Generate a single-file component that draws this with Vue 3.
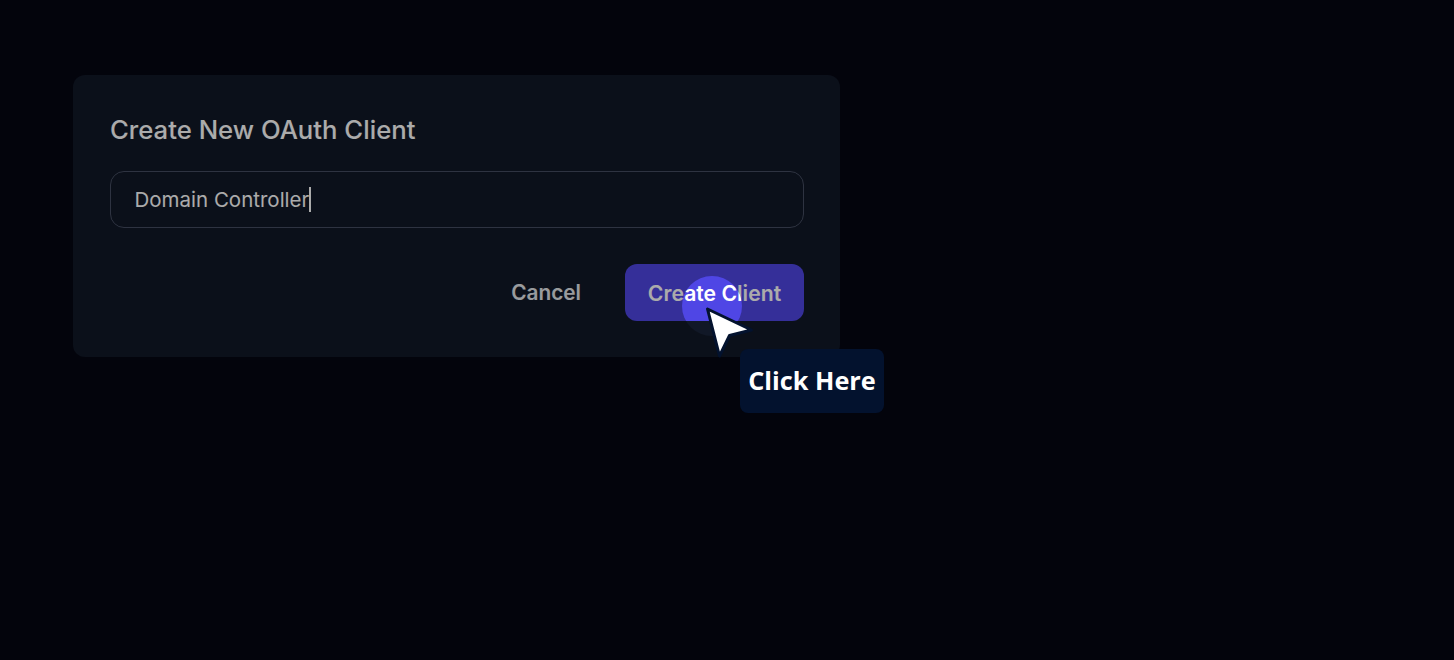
<script setup>
const title = 'Create New OAuth Client'
const clientName = 'Domain Controller'
</script>

<template>
  <main class="page">
    <section class="card">
      <h2 class="title">{{ title }}</h2>
      <div class="field">
        <span class="value">{{ clientName }}</span><span class="caret"></span>
      </div>
      <div class="actions">
        <button class="cancel" type="button">Cancel</button>
        <button class="create" type="button">Create Client</button>
      </div>
    </section>

    <div class="spotlight"></div>
    <svg class="pointer" width="52" height="54" viewBox="0 0 52 54">
      <path d="M3.5 4 L47.5 25 L25.5 30.5 L15.5 51 Z" fill="#ffffff" stroke="#03122e" stroke-width="3" stroke-linejoin="round" />
    </svg>
    <div class="hint">Click Here</div>
  </main>
</template>

<style>
html, body {
  margin: 0;
  background: #050613;
  overflow: hidden;
}
</style>

<style scoped>
.page {
  position: relative;
  box-sizing: border-box;
  width: 1454px;
  height: 660px;
  padding: 75px 0 0 73px;
  overflow: hidden;
  background: #050613;
  font-family: Inter, "Liberation Sans", sans-serif;
}
.card {
  box-sizing: border-box;
  width: 767px;
  height: 282px;
  padding: 36px;
  border-radius: 12px;
  background: #111827;
}
.title {
  margin: 0 0 0 1px;
  font-size: 25.7px;
  line-height: 38px;
  font-weight: 500;
  color: #ffffff;
}
.field {
  display: flex;
  align-items: center;
  box-sizing: border-box;
  height: 57px;
  margin: 22px 0 0 0.5px;
  padding: 0 24px;
  border: 1.5px solid #454d61;
  border-radius: 14px;
  font-size: 20.5px;
  color: #ffffff;
}
.caret {
  width: 1.5px;
  height: 25px;
  background: #ffffff;
}
.actions {
  display: flex;
  justify-content: flex-end;
  align-items: center;
  gap: 20px;
  margin-top: 36px;
}
.cancel,
.create {
  height: 57px;
  padding: 0 24px;
  border: 0;
  border-radius: 12px;
  background: transparent;
  font-family: inherit;
  font-size: 20.8px;
  font-weight: 600;
  color: #e5e7eb;
}
.create {
  width: 179px;
  padding: 0;
  background: #4f46e5;
  color: #ffffff;
  white-space: nowrap;
  font-size: 21.2px;
}
.spotlight {
  position: absolute;
  left: 682px;
  top: 276px;
  width: 60px;
  height: 60px;
  border-radius: 50%;
  box-shadow: 0 0 0 1600px rgba(0, 0, 0, 0.33);
}
.pointer {
  position: absolute;
  left: 704px;
  top: 305px;
}
.hint {
  position: absolute;
  left: 740px;
  top: 349px;
  box-sizing: border-box;
  width: 144px;
  height: 64px;
  border-radius: 8px;
  background: #03122e;
  color: #ffffff;
  font-family: "Open Sans", sans-serif;
  font-size: 25.3px;
  font-weight: 700;
  line-height: 62px;
  text-align: center;
  white-space: nowrap;
}
</style>
